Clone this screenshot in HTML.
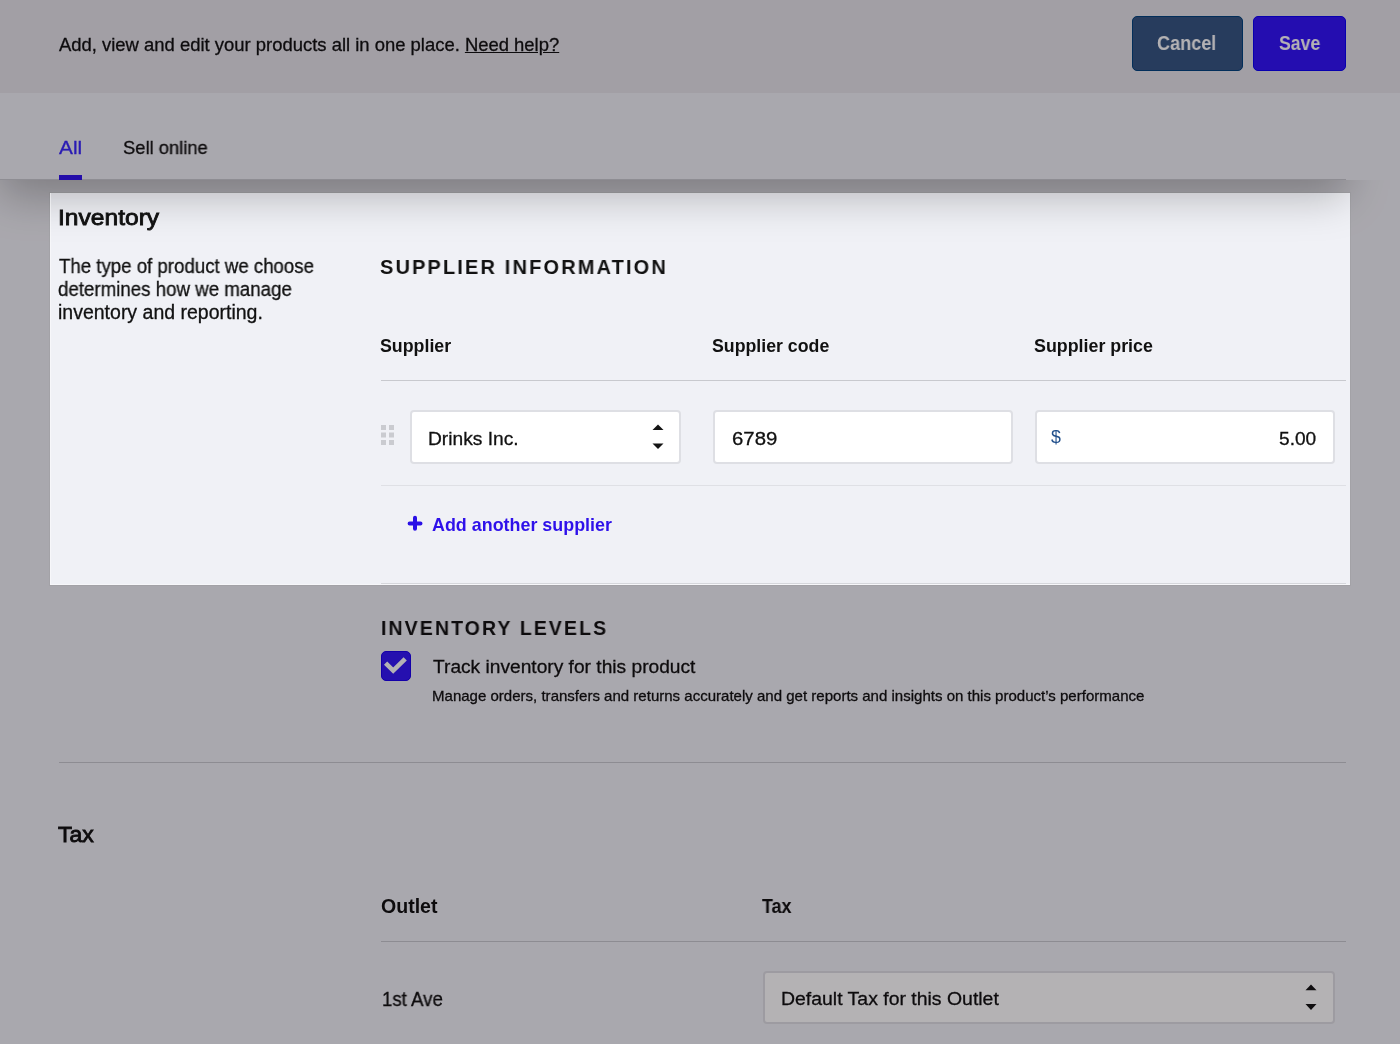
<!DOCTYPE html>
<html><head><meta charset="utf-8">
<style>
*{box-sizing:border-box;margin:0;padding:0}
html,body{width:1400px;height:1044px;overflow:hidden}
body{background:#f0f1f6;position:relative;font-family:"Liberation Sans",sans-serif;color:#141414}
.a{position:absolute}
.t{position:absolute;white-space:pre;line-height:40px;height:40px;transform-origin:0 50%;will-change:transform}
.r{-webkit-text-stroke:.3px currentColor}
.m{font-weight:400;-webkit-text-stroke:.85px currentColor}
.b{font-weight:700}
#hdr{left:0;top:0;width:1400px;height:93px;background:#e5e4ea}
#tabs{left:0;top:93px;width:1400px;height:87px;background:#f0f1f6}
#tabline{left:0;top:179px;width:1346px;height:1px;background:#c9cad0}
#shadow{left:0;top:93px;width:1346px;height:87px;box-shadow:0 16px 44px rgba(0,0,0,.26)}
.btn{position:absolute;border-radius:5px}
.hr{position:absolute;height:1px}
.inp{position:absolute;background:#fff;border:2px solid #dedfe4;border-radius:4px}
#hole{left:50px;top:193px;width:1300px;height:392px;box-shadow:inset 1px -1px 0 0 rgba(255,255,255,.45),0 0 0 1px rgba(0,0,0,.04),0 0 0 3000px rgba(8,0,6,.3);z-index:50}
</style></head><body>
<div id="shadow" class="a"></div>
<div id="hdr" class="a"></div>
<div id="tabs" class="a"></div>
<div id="tabline" class="a"></div>

<!-- header -->
<div class="btn" style="left:1132px;top:16px;width:111px;height:55px;background:#355683;border:1px solid #00437e"></div>
<div class="btn" style="left:1253px;top:16px;width:93px;height:55px;background:#3214fa;border:1px solid #0a00f8"></div>

<!-- tab underline -->
<div class="a" style="left:59px;top:175px;width:23px;height:5px;background:#3214f0"></div>

<!-- dividers -->
<div class="hr" style="left:381px;top:380px;width:965px;background:#c8c9ce"></div>
<div class="hr" style="left:381px;top:485px;width:965px;background:#dfe0e5"></div>
<div class="hr" style="left:381px;top:583px;width:965px;background:#d6d7dc"></div>
<div class="hr" style="left:59px;top:762px;width:1287px;background:#c8c9ce"></div>
<div class="hr" style="left:381px;top:941px;width:965px;background:#c8c9ce"></div>

<!-- inputs -->
<div class="inp" style="left:410px;top:410px;width:271px;height:54px"></div>
<div class="inp" style="left:713px;top:410px;width:300px;height:54px"></div>
<div class="inp" style="left:1035px;top:410px;width:300px;height:54px"></div>
<div class="inp" style="left:763px;top:971px;width:572px;height:53px"></div>

<!-- select arrows -->
<svg class="a" style="left:650px;top:420px" width="16" height="34" viewBox="0 0 16 34">
  <path d="M2.5 10 L8 4.5 L13.5 10 Z" fill="#141414"/><path d="M2.5 23.5 L8 29 L13.5 23.5 Z" fill="#141414"/>
</svg>
<svg class="a" style="left:1303px;top:980px" width="16" height="34" viewBox="0 0 16 34">
  <path d="M2.5 10.3 L8 4.6 L13.5 10.3 Z" fill="#141414"/><path d="M2.5 24.1 L8 29.9 L13.5 24.1 Z" fill="#141414"/>
</svg>

<!-- drag handle -->
<svg class="a" style="left:380px;top:424px" width="16" height="24" viewBox="0 0 16 24">
  <g fill="#cacbd0"><rect x="1" y="1" width="5" height="5"/><rect x="9" y="1" width="5" height="5"/>
  <rect x="1" y="8.5" width="5" height="5"/><rect x="9" y="8.5" width="5" height="5"/>
  <rect x="1" y="16" width="5" height="5"/><rect x="9" y="16" width="5" height="5"/></g>
</svg>

<!-- plus -->
<svg class="a" style="left:404px;top:512px" width="24" height="24" viewBox="0 0 24 24">
  <path d="M11 5.8 V 16.7 M5.6 11.5 H 16.5" stroke="#2a10e6" stroke-width="4" stroke-linecap="round"/>
</svg>

<!-- checkbox -->
<div class="a" style="left:381px;top:651px;width:30px;height:30px;border-radius:5px;background:#3317f8;border:1px solid #1a00f0"></div>
<svg class="a" style="left:381px;top:651px" width="30" height="30" viewBox="0 0 30 30">
  <path d="M4.6 12.2 L12.2 19.6 L24.2 7.9" stroke="#fff" stroke-width="4.6" fill="none" stroke-linecap="butt" stroke-linejoin="miter"/>
</svg>

<div id="texts"></div>
<div class="t r" style="left:59.00px;top:25px;font-size:18.4px;letter-spacing:0.00px;color:#111111;transform:scaleX(1.0026)">Add, view and edit your products all in one place. <u>Need help?</u></div>
<div class="t b" style="left:1157.06px;top:24px;font-size:19.3px;letter-spacing:0.00px;color:#ffffff;transform:scaleX(0.9377)">Cancel</div>
<div class="t b" style="left:1278.58px;top:24px;font-size:19.3px;letter-spacing:0.00px;color:#ffffff;transform:scaleX(0.9186)">Save</div>
<div class="t r" style="left:59.20px;top:128px;font-size:19.2px;letter-spacing:0.00px;color:#3a28ff;transform:scaleX(1.0850)">All</div>
<div class="t r" style="left:123.01px;top:128px;font-size:18.5px;letter-spacing:0.00px;color:#111111;transform:scaleX(0.9929)">Sell online</div>
<div class="t m" style="left:57.82px;top:198px;font-size:22.6px;letter-spacing:0.00px;color:#111111;transform:scaleX(1.0879)">Inventory</div>
<div class="t r" style="left:59.30px;top:247px;font-size:19.3px;letter-spacing:0.00px;color:#111111;transform:scaleX(0.9669)">The type of product we choose</div>
<div class="t r" style="left:58.33px;top:270px;font-size:19.3px;letter-spacing:0.00px;color:#111111;transform:scaleX(0.9695)">determines how we manage</div>
<div class="t r" style="left:58.30px;top:292px;font-size:19.5px;letter-spacing:0.00px;color:#111111;transform:scaleX(0.9985)">inventory and reporting.</div>
<div class="t b" style="left:380.41px;top:247px;font-size:20.2px;letter-spacing:2.20px;color:#111111;transform:scaleX(0.9878)">SUPPLIER INFORMATION</div>
<div class="t b" style="left:380.40px;top:326px;font-size:17.8px;letter-spacing:0.00px;color:#111111;transform:scaleX(0.9957)">Supplier</div>
<div class="t b" style="left:712.00px;top:326px;font-size:17.7px;letter-spacing:0.00px;color:#111111;transform:scaleX(1.0026)">Supplier code</div>
<div class="t b" style="left:1033.60px;top:326px;font-size:17.8px;letter-spacing:0.00px;color:#111111;transform:scaleX(1.0026)">Supplier price</div>
<div class="t r" style="left:428.40px;top:419px;font-size:19.2px;letter-spacing:0.00px;color:#111111;transform:scaleX(0.9989)">Drinks Inc.</div>
<div class="t r" style="left:732.24px;top:419px;font-size:19.2px;letter-spacing:0.00px;color:#111111;transform:scaleX(1.0610)">6789</div>
<div class="t" style="left:1050.80px;top:417px;font-size:17.8px;letter-spacing:0.00px;color:#22508c;transform:scaleX(0.9700)">$</div>
<div class="t r" style="left:1278.79px;top:419px;font-size:19.0px;letter-spacing:0.00px;color:#111111;transform:scaleX(1.0057)">5.00</div>
<div class="t b" style="left:432.40px;top:505px;font-size:17.9px;letter-spacing:0.00px;color:#2e10ea;transform:scaleX(0.9994)">Add another supplier</div>
<div class="t b" style="left:380.84px;top:608px;font-size:20.2px;letter-spacing:2.20px;color:#111111;transform:scaleX(0.9642)">INVENTORY LEVELS</div>
<div class="t r" style="left:432.50px;top:647px;font-size:19.1px;letter-spacing:0.00px;color:#111111;transform:scaleX(1.0038)">Track inventory for this product</div>
<div class="t r" style="left:431.50px;top:676px;font-size:15.0px;letter-spacing:0.00px;color:#111111;transform:scaleX(1.0020)">Manage orders, transfers and returns accurately and get reports and insights on this product’s performance</div>
<div class="t m" style="left:58.38px;top:815px;font-size:22.6px;letter-spacing:0.00px;color:#111111;transform:scaleX(1.0176)">Tax</div>
<div class="t b" style="left:380.75px;top:886px;font-size:19.5px;letter-spacing:0.00px;color:#111111;transform:scaleX(1.0027)">Outlet</div>
<div class="t b" style="left:761.80px;top:887px;font-size:19.3px;letter-spacing:0.00px;color:#111111;transform:scaleX(0.9290)">Tax</div>
<div class="t r" style="left:382.03px;top:980px;font-size:19.3px;letter-spacing:0.00px;color:#111111;transform:scaleX(0.9672)">1st Ave</div>
<div class="t r" style="left:780.67px;top:979px;font-size:19.2px;letter-spacing:0.00px;color:#111111;transform:scaleX(1.0127)">Default Tax for this Outlet</div>

<div id="hole" class="a"></div>
</body></html>
